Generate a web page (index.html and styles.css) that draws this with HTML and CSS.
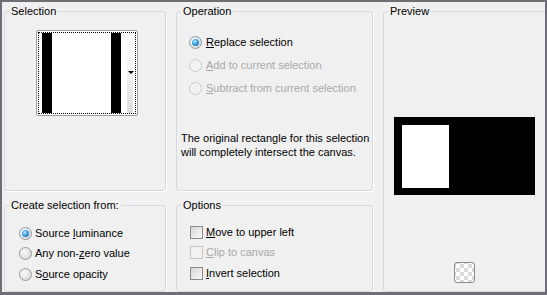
FILE: index.html
```html
<!DOCTYPE html>
<html lang="en">
<head>
  <meta charset="UTF-8">
  <meta name="viewport" content="width=device-width, initial-scale=1.0">
  <title>Selection From Mask</title>
  <link rel="stylesheet" href="styles.css">
</head>
<body>
  <div class="dialog">

    <fieldset class="group group-selection">
      <legend>Selection</legend>
      <div class="thumb">
        <div class="thumb-inner">
          <span class="gap-left"></span>
          <span class="bar"></span>
          <span class="fill"></span>
          <span class="bar"></span>
          <span class="gap-right"></span>
          <span class="strip"><span class="arrow"></span></span>
        </div>
      </div>
    </fieldset>

    <fieldset class="group group-operation">
      <legend>Operation</legend>
      <div class="radio-list wide">
        <label class="option"><span class="radio checked"></span><span><u>R</u>eplace selection</span></label>
        <label class="option disabled"><span class="radio"></span><span><u>A</u>dd to current selection</span></label>
        <label class="option disabled"><span class="radio"></span><span><u>S</u>ubtract from current selection</span></label>
      </div>
      <p class="note">The original rectangle for this selection<br>will completely intersect the canvas.</p>
    </fieldset>

    <fieldset class="group group-preview">
      <legend>Preview</legend>
      <div class="preview">
        <div class="preview-canvas"><div class="preview-sel"></div></div>
        <div class="checker"></div>
      </div>
    </fieldset>

    <fieldset class="group group-source">
      <legend>Create selection from:</legend>
      <div class="radio-list">
        <label class="option"><span class="radio checked"></span><span>Source <u>l</u>uminance</span></label>
        <label class="option"><span class="radio"></span><span>Any non-<u>z</u>ero value</span></label>
        <label class="option"><span class="radio"></span><span>S<u>o</u>urce opacity</span></label>
      </div>
    </fieldset>

    <fieldset class="group group-options">
      <legend>Options</legend>
      <div class="check-list">
        <label class="option"><span class="check"></span><span><u>M</u>ove to upper left</span></label>
        <label class="option disabled"><span class="check"></span><span><u>C</u>lip to canvas</span></label>
        <label class="option"><span class="check"></span><span><u>I</u>nvert selection</span></label>
      </div>
    </fieldset>

  </div>
</body>
</html>
```

FILE: styles.css
```css
body {
  margin: 0;
  font-family: "Liberation Sans", Arial, sans-serif;
  font-size: 11px;
  line-height: 13px;
  color: #000;
  background-color: #6f6e76;
}

.dialog {
  width: 547px;
  height: 295px;
  box-sizing: border-box;
  border-top: 2px solid #6f6e76;
  border-left: 2px solid #6f6e76;
  border-right: 2px solid #6f6e76;
  border-bottom: 3px solid #6f6e76;
  padding: 3px 0 0 2px;
  background-color: #f0f0f0;
  overflow: hidden;
  display: grid;
  grid-template-columns: 162px 197px 1fr;
  grid-template-rows: 186px 1fr;
  column-gap: 10px;
  row-gap: 8px;
}

.group {
  margin: 0;
  padding: 0;
  min-width: 0;
  border: 1px solid #d3dbe1;
  border-radius: 3px;
  box-shadow: 1px 1px 0 #fff;
}

.group legend {
  margin-left: 4px;
  padding: 0 2px;
}

.group-preview {
  grid-row: 1 / 3;
  grid-column: 3;
  margin-right: -4px;
}

/* selection thumbnail */
.thumb {
  margin: 12px 0 0 31px;
  width: 102px;
  height: 86px;
  box-sizing: border-box;
  border: 1px solid #9c9c9c;
  border-radius: 2px;
  padding: 1px;
  background: #fff;
}

.thumb-inner {
  height: 100%;
  box-sizing: border-box;
  border: 1px dotted #000;
  display: flex;
}

.thumb-inner .gap-left { width: 3px; }
.thumb-inner .bar { width: 10px; background: #000; }
.thumb-inner .fill { width: 59px; }
.thumb-inner .gap-right { width: 6px; }

.thumb-inner .strip {
  width: 6px;
  position: relative;
  background: linear-gradient(#fbfbfb 0%, #f4f4f4 45%, #dcdcdc 100%);
}

.arrow {
  position: absolute;
  left: 1px;
  top: 38px;
  border-left: 3px solid transparent;
  border-right: 3px solid transparent;
  border-top: 3px solid #000;
}

/* radio and check lists */
.radio-list {
  padding: 13px 0 0 12px;
}

.radio-list .option {
  height: 23px;
}

.group-source .radio-list {
  padding: 11px 0 0 14px;
}

.group-source .radio-list .option {
  height: 20.5px;
}

.check-list {
  padding: 10px 0 0 13px;
}

.check-list .option {
  height: 20.5px;
}

.option {
  display: flex;
  align-items: center;
  gap: 3px;
}

.wide .option {
  gap: 4px;
}

.option.disabled {
  color: #a9a9a9;
}

.radio {
  width: 13px;
  height: 13px;
  box-sizing: border-box;
  border-radius: 50%;
  border: 1px solid #8f9aa5;
  background: radial-gradient(circle at 35% 35%, #fafafa 0%, #e2e2e2 60%, #cfcfcf 100%);
  flex: none;
  position: relative;
}

.radio.checked::after {
  content: "";
  position: absolute;
  left: 2px;
  top: 2px;
  width: 7px;
  height: 7px;
  border-radius: 50%;
  background: radial-gradient(circle at 40% 35%, #bfe9ff 0%, #3a9fe0 45%, #135b9e 100%);
}

.disabled .radio {
  border-color: #c8cbcf;
  background: #f2f2f2;
}

.check {
  width: 13px;
  height: 13px;
  box-sizing: border-box;
  border: 1px solid #8a8a8a;
  background: linear-gradient(135deg, #d6d6d6 0%, #ececec 60%, #f7f7f7 100%);
  flex: none;
}

.disabled .check {
  border-color: #c7c7c7;
  background: #f2f2f2;
}

.note {
  margin: 31px 0 0 4px;
  line-height: 14px;
}

/* preview */
.preview-canvas {
  margin: 99px 0 0 10px;
  width: 141px;
  height: 78px;
  box-sizing: border-box;
  background: #000;
  padding: 8px 0 0 8px;
}

.preview-sel {
  width: 47px;
  height: 63px;
  background: #fff;
}

.checker {
  margin: 67px 0 0 70px;
  width: 21px;
  height: 21px;
  box-sizing: border-box;
  border: 1px solid #8c8c8c;
  border-radius: 3px;
  background-color: #fff;
  background-image: conic-gradient(#d9d9d9 25%, #fff 0 50%, #d9d9d9 0 75%, #fff 0);
  background-size: 8px 8px;
  background-position: 1px 1px;
}
```
